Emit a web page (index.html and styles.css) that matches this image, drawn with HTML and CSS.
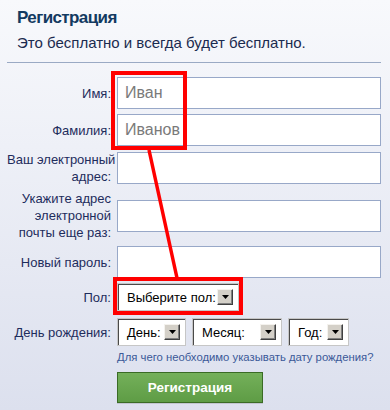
FILE: index.html
```html
<!DOCTYPE html>
<html lang="ru">
<head>
<meta charset="utf-8">
<title>Регистрация</title>
<link rel="stylesheet" href="styles.css">
</head>
<body>
<div class="page">
  <div class="header">
    <h1 class="title">Регистрация</h1>
    <p class="subtitle">Это бесплатно и всегда будет бесплатно.</p>
  </div>
  <div class="form">
    <div class="label">Имя:</div>
    <div class="input"><span class="ph">Иван</span></div>

    <div class="label">Фамилия:</div>
    <div class="input"><span class="ph">Иванов</span></div>

    <div class="label">Ваш электронный<br>адрес:</div>
    <div class="input"></div>

    <div class="label">Укажите адрес<br>электронной<br>почты еще раз:</div>
    <div class="input"></div>

    <div class="label">Новый пароль:</div>
    <div class="input"></div>

    <div class="label">Пол:</div>
    <div class="field">
      <div class="select sel-sex"><span class="sel-text">Выберите пол:</span><span class="arrow"><svg width="7" height="4" viewBox="0 0 7 4"><path d="M0 0H7L3.5 4Z" fill="#000"/></svg></span></div>
    </div>

    <div class="label birth-label">День рождения:</div>
    <div class="field birth">
      <div class="select sel-day"><span class="sel-text">День:</span><span class="arrow"><svg width="7" height="4" viewBox="0 0 7 4"><path d="M0 0H7L3.5 4Z" fill="#000"/></svg></span></div>
      <div class="select sel-month"><span class="sel-text">Месяц:</span><span class="arrow"><svg width="7" height="4" viewBox="0 0 7 4"><path d="M0 0H7L3.5 4Z" fill="#000"/></svg></span></div>
      <div class="select sel-year"><span class="sel-text">Год:</span><span class="arrow"><svg width="7" height="4" viewBox="0 0 7 4"><path d="M0 0H7L3.5 4Z" fill="#000"/></svg></span></div>
    </div>

    <div class="spacer"></div>
    <a class="why" href="#">Для чего необходимо указывать дату рождения?</a>

    <div class="spacer"></div>
    <div class="btn-cell"><button class="btn" type="button">Регистрация</button></div>
  </div>

  <div class="mark mark-name"></div>
  <div class="mark mark-sex"></div>
  <svg class="mark-line" width="390" height="410" viewBox="0 0 390 410">
    <line x1="149" y1="150" x2="177" y2="278" stroke="#ff0000" stroke-width="3.5"/>
  </svg>
</div>
</body>
</html>
```

FILE: styles.css
```css
html, body {
  margin: 0;
  padding: 0;
}

body {
  font-family: "Liberation Sans", Arial, sans-serif;
}

.page {
  position: relative;
  width: 390px;
  height: 410px;
  overflow: hidden;
  background: linear-gradient(#f8f9fc, #dce0ee);
  box-sizing: border-box;
  padding: 0 9px 0 7px;
}

.header {
  padding: 6px 0 11px 10px;
  border-bottom: 1px solid #9aaac4;
}

.title {
  margin: 0;
  font-size: 17px;
  line-height: 24px;
  font-weight: bold;
  letter-spacing: -0.6px;
  color: #133a61;
}

.subtitle {
  margin: 4px 0 0 0;
  font-size: 15px;
  line-height: 17px;
  color: #1b2b4f;
}

.form {
  display: grid;
  grid-template-columns: 104px 264px;
  column-gap: 6px;
  row-gap: 5px;
  align-items: center;
  margin-top: 14px;
}

.label {
  text-align: right;
  font-size: 13px;
  line-height: 17px;
  color: #1e2c5c;
  white-space: nowrap;
}

.input {
  height: 32px;
  box-sizing: border-box;
  background: #fff;
  border: 1px solid #98a8c8;
  padding: 0 7px;
  display: flex;
  align-items: center;
}

.ph {
  font-size: 16px;
  color: #7a7a7a;
}

.field {
  display: flex;
}

.birth {
  gap: 6px;
  margin-top: 2px;
}

.birth-label {
  margin-top: 2px;
}

.select {
  height: 28px;
  box-sizing: border-box;
  background: #fff;
  border: 1px solid #c6c6c6;
  box-shadow: inset 1px 1px 0 #4a4a4a;
  display: flex;
  align-items: center;
  justify-content: space-between;
  padding: 0 5px 0 9px;
  font-size: 13px;
  color: #000;
  white-space: nowrap;
}

.sel-sex { width: 122px; }
.sel-day { width: 69px; }
.sel-month { width: 90px; }
.sel-year { width: 61px; }

.arrow {
  width: 16px;
  height: 16px;
  flex: none;
  box-sizing: border-box;
  background: #d4d0c8;
  border: 1px solid;
  border-color: #f4f2ee #404040 #404040 #f4f2ee;
  box-shadow: inset -1px -1px 0 #808080;
  display: flex;
  align-items: center;
  justify-content: center;
}

.arrow svg {
  display: block;
}

.spacer {
  height: 1px;
}

.why {
  font-size: 11.3px;
  line-height: 14px;
  color: #3b5998;
  text-decoration: none;
  white-space: nowrap;
  margin-top: -1px;
}

.btn-cell {
  margin-top: 3px;
}

.btn {
  width: 146px;
  height: 31px;
  box-sizing: border-box;
  border: 1px solid #3a6b25;
  background: linear-gradient(#74b05a, #5e9c45);
  color: #fff;
  font-family: "Liberation Sans", Arial, sans-serif;
  font-size: 13.5px;
  font-weight: bold;
  padding: 0;
  box-shadow: 0 1px 0 rgba(0,0,0,0.12);
}

.mark {
  position: absolute;
  border: 4px solid #ff0000;
  box-sizing: border-box;
}

.mark-name {
  left: 111px;
  top: 71px;
  width: 76px;
  height: 79px;
}

.mark-sex {
  left: 113px;
  top: 277px;
  width: 130px;
  height: 38px;
}

.mark-line {
  position: absolute;
  left: 0;
  top: 0;
  pointer-events: none;
}
```
